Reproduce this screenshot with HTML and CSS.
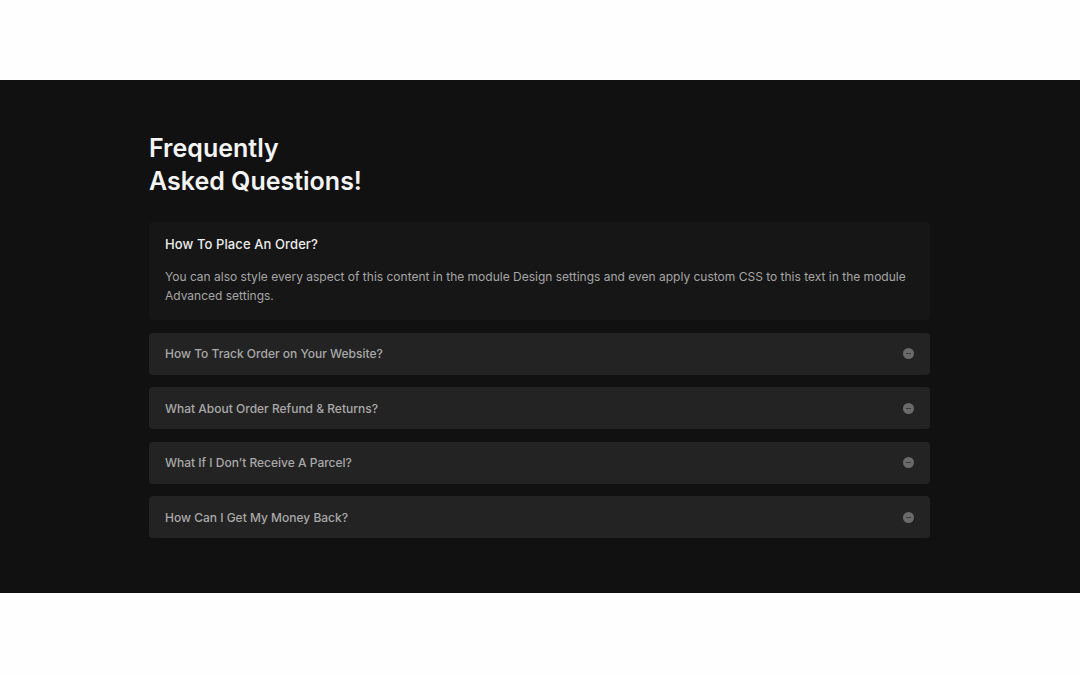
FILE: index.html
```html
<!DOCTYPE html>
<html lang="en">

<head>
    <meta charset="UTF-8">
    <meta name="viewport" content="width=device-width, initial-scale=1.0">
    <title>FAQ</title>
    <link rel="stylesheet" href="styles.css">
</head>

<body>
    <section class="faq-section">
        <div class="faq-wrap">
            <h2 class="faq-title">Frequently<br>Asked Questions!</h2>

            <div class="faq-list">
                <div class="faq-item open">
                    <h3 class="faq-question">How To Place An Order?</h3>
                    <p class="faq-answer">
                        You can also style every aspect of this content in the module Design settings and even apply
                        custom CSS to this text in the module Advanced settings.
                    </p>
                </div>
                <div class="faq-item">
                    <h3 class="faq-question">How To Track Order on Your Website?</h3>
                    <span class="toggle"></span>
                </div>
                <div class="faq-item">
                    <h3 class="faq-question">What About Order Refund &amp; Returns?</h3>
                    <span class="toggle"></span>
                </div>
                <div class="faq-item">
                    <h3 class="faq-question">What If I Don’t Receive A Parcel?</h3>
                    <span class="toggle"></span>
                </div>
                <div class="faq-item">
                    <h3 class="faq-question">How Can I Get My Money Back?</h3>
                    <span class="toggle"></span>
                </div>
            </div>
        </div>
    </section>
</body>

</html>
```

FILE: styles.css
```css
body {
    margin: 0;
    padding: 80px 0 82px 0;
    background: #fefefe;
    font-family: Inter, 'Noto Sans', sans-serif;
}

.faq-section {
    background: #111111;
    padding: 52px 0 55px 0;
}

.faq-wrap {
    width: 781px;
    margin-left: 149px;
}

.faq-title {
    margin: 0 0 24px 0;
    color: #f4f4f4;
    font-size: 25px;
    font-weight: 600;
    line-height: 33px;
    letter-spacing: 0;
}

.faq-list {
    display: flex;
    flex-direction: column;
    gap: 12.5px;
}

.faq-item {
    display: flex;
    align-items: center;
    justify-content: space-between;
    height: 42px;
    padding: 0 16px;
    background: #232323;
    border-radius: 4px;
}

.faq-item.open {
    display: block;
    height: auto;
    padding: 14px 16px 15px 16px;
    background: #161616;
}

.faq-question {
    margin: 0;
    color: #a9a9a9;
    font-size: 12px;
    font-weight: 500;
}

.open .faq-question {
    color: #ececec;
    font-size: 13px;
    line-height: 17px;
    letter-spacing: 0.1px;
}

.faq-answer {
    margin: 14px 0 0 0;
    color: #a6a6a6;
    font-size: 12px;
    line-height: 19px;
}

.toggle {
    position: relative;
    width: 11px;
    height: 11px;
    border-radius: 50%;
    background: #6a6a6a;
}

.toggle::after {
    content: '';
    position: absolute;
    left: 3px;
    top: 5px;
    width: 5px;
    height: 1px;
    background: #3c3c3c;
}
```
